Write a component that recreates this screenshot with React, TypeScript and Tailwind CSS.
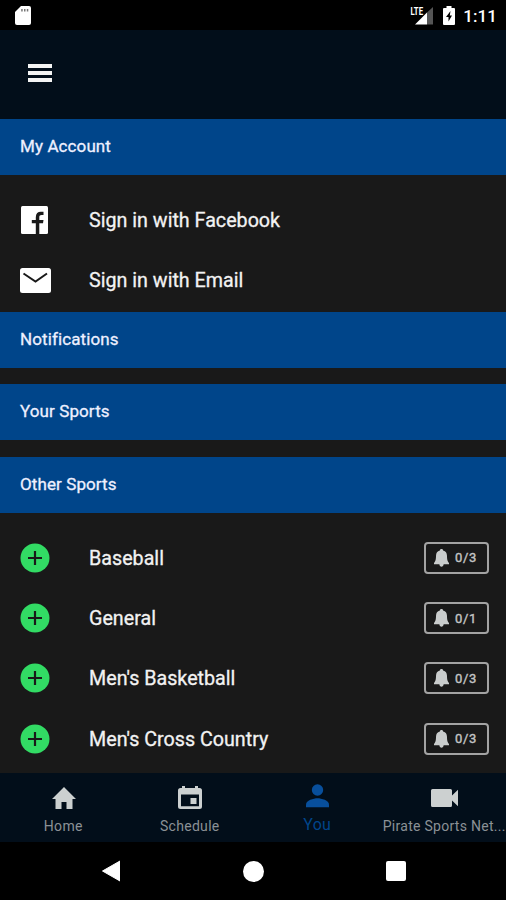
import React from "react";

const sports = [
  { name: "Baseball", count: "0/3" },
  { name: "General", count: "0/1" },
  { name: "Men's Basketball", count: "0/3" },
  { name: "Men's Cross Country", count: "0/3" },
];

function StatusBar() {
  return (
    <div className="flex h-[30px] items-start bg-black pl-[15px] pr-[9px] text-white">
      <svg className="mt-[6px]" width="16" height="19" viewBox="0 0 16 19">
        <path
          d="M6 0h8a2 2 0 0 1 2 2v15a2 2 0 0 1-2 2H2a2 2 0 0 1-2-2V6z"
          fill="#fff"
        />
        <path d="M6.2 3h1.500v2.500H6.200zM9 3h1.500v2.500H9zM11.800 3h1.500v2.500h-1.500z" fill="#777" />
      </svg>

      <div className="ml-auto flex items-start">
        <svg className="mt-[6px]" width="24" height="19" viewBox="0 0 24 19">
          <path d="M17 6.500 23 1v17.500h-6z" fill="#555" />
          <path d="M17 6.500v12H5z" fill="#fff" />
          <text
            x="0.5"
            y="8.5"
            fill="#fff"
            stroke="#000"
            strokeWidth="1.2"
            paintOrder="stroke"
            fontSize="11"
            fontWeight="700"
            textLength="12.5"
            lengthAdjust="spacingAndGlyphs"
          >
            LTE
          </text>
        </svg>
        <svg className="ml-[9px] mt-[6px]" width="12" height="19" viewBox="0 0 12 19">
          <path
            d="M3.500 0h5v2H11a1 1 0 0 1 1 1v15a1 1 0 0 1-1 1H1a1 1 0 0 1-1-1V3a1 1 0 0 1 1-1h2.500z"
            fill="#fff"
          />
          <path d="M7.500 5 3 11h2.500v4.500L9 9.500H6.800z" fill="#000" />
        </svg>
        <span className="ml-[8px] mt-[3px] text-[17px] font-medium leading-[26px] tracking-[0.1px]">
          1:11
        </span>
      </div>
    </div>
  );
}

function SectionTitle({ children }: { children: React.ReactNode }) {
  return (
    <h2 className="flex h-14 items-center bg-[#00458a] pl-5 text-[17px] font-normal tracking-[0.1px] text-[#eef0ff] [-webkit-text-stroke:0.3px_#eef0ff]">
      {children}
    </h2>
  );
}

function Row({
  icon,
  label,
  children,
}: {
  icon: React.ReactNode;
  label: string;
  children?: React.ReactNode;
}) {
  return (
    <div className="flex h-[60.2px] items-center pl-5 pr-[17px]">
      <div className="flex w-[69px]">{icon}</div>
      <span className="pt-[2px] text-[19.7px] leading-7 text-[#f2f2f2] [-webkit-text-stroke:0.3px_#f2f2f2]">
        {label}
      </span>
      {children}
    </div>
  );
}

function FacebookIcon() {
  return (
    <svg className="ml-px" width="28" height="28" viewBox="0 0 28 28">
      <rect width="27" height="28" rx="1.500" fill="#fff" />
      <path
        d="M14.800 28V17.200H10.800v-3.200h4v-2.800c0-3.600 2-5.400 5-5.400h2.700v3.300h-1.900c-1.700 0-2.300.8-2.300 2.200V14h4.200l-.5 3.200h-3.700V28z"
        fill="#191919"
      />
    </svg>
  );
}

function MailIcon() {
  return (
    <svg width="31" height="25" viewBox="0 0 31 25">
      <rect width="31" height="25" rx="2.500" fill="#fff" />
      <path d="M3.500 5.500 15.500 13.500 27 5.500" fill="none" stroke="#191919" strokeWidth="2" />
    </svg>
  );
}

function AddIcon() {
  return (
    <svg width="30" height="30" viewBox="0 0 30 30">
      <circle cx="15" cy="15" r="14.500" fill="#32db64" />
      <path d="M15 8v14M8 15h14" stroke="#191919" strokeWidth="2.200" />
    </svg>
  );
}

function AlertCount({ count }: { count: string }) {
  return (
    <div className="ml-auto flex h-8 w-[65px] items-center rounded-[4px] border-2 border-[#a3a3a3] pl-[8px] text-[13px] tracking-[0.7px] text-[#c4c4c4] [-webkit-text-stroke:0.4px_#c4c4c4]">
      <svg className="mr-[6px]" width="15" height="18" viewBox="0 0 14 18" preserveAspectRatio="none">
        <path
          d="M7 0C6 0 5.500.6 5.500 1.500 3 2.200 2 4 1.900 6.500 1.800 10.500 1.600 12 0 14v1.200h14V14c-1.600-2-1.800-3.500-1.900-7.500C12 4 11 2.200 8.500 1.500 8.500.6 8 0 7 0zM5 15.200c.1 1.600.9 2.500 2 2.500s1.900-.9 2-2.500z"
          fill="#c9cccc"
        />
      </svg>
      {count}
    </div>
  );
}

function TabBar() {
  return (
    <nav className="grid h-[69px] grid-cols-4 bg-[#020e1a] text-[14px] text-[#8b9196]">
      <div className="flex flex-col items-center">
        <svg className="ml-px mt-[14px]" width="24" height="22" viewBox="0 0 24 22">
          <path d="M9.500 22v-7h5v7h6V12H24L12 0 0 12h3.500v10z" fill="#ccd0d0" />
        </svg>
        <span className="mt-[7px] leading-5 tracking-[0.3px]">Home</span>
      </div>
      <div className="flex flex-col items-center">
        <svg className="ml-px mt-[13px]" width="24" height="23" viewBox="0 0 24 23">
          <path
            fillRule="evenodd"
            d="M4 0h3v2h10V0h3v2h1.500A2.500 2.500 0 0 1 24 4.500v16a2.500 2.500 0 0 1-2.500 2.500h-19A2.500 2.500 0 0 1 0 20.500v-16A2.500 2.500 0 0 1 2.500 2H4zM3 8.500v11.800h18V8.500z"
            fill="#ccd0d0"
          />
          <path d="M12.500 12H18.500V18H12.500z" fill="#ccd0d0" />
        </svg>
        <span className="mt-[7px] leading-5 tracking-[0.3px]">Schedule</span>
      </div>
      <div className="flex flex-col items-center text-[#00458a]">
        <svg className="ml-[2px] mt-[11px]" width="23" height="24" viewBox="0 0 23 24">
          <circle cx="11.500" cy="6" r="5.700" fill="#084f9c" />
          <path d="M11.500 14.200C7.500 14.200 0 16.400 0 20.400V23.300h23v-2.900c0-4-7.500-6.200-11.500-6.200z" fill="#084f9c" />
        </svg>
        <span className="ml-[2px] mt-[7px] text-[16px] leading-5 tracking-[0.3px]">You</span>
      </div>
      <div className="flex min-w-0 flex-col items-center">
        <svg className="ml-[3px] mt-[16px]" width="27" height="18" viewBox="0 0 27 18">
          <path
            d="M1.500 0h18A1.500 1.500 0 0 1 21 1.500v5L27 .8v16.400l-6-5.700v5a1.500 1.500 0 0 1-1.500 1.500h-18A1.500 1.500 0 0 1 0 16.500v-15A1.500 1.500 0 0 1 1.500 0z"
            fill="#ccd0d0"
          />
        </svg>
        <span className="ml-[3px] mt-[9px] whitespace-nowrap leading-5 tracking-[0.28px]">
          Pirate Sports Net...
        </span>
      </div>
    </nav>
  );
}

function SystemNav() {
  return (
    <div className="flex h-[58px] items-center bg-black pl-[102px]">
      <svg width="18" height="22" viewBox="0 0 18 22">
        <path d="M18 1v20L.5 11z" fill="#fff" stroke="#fff" strokeLinejoin="round" />
      </svg>
      <div className="ml-[123px] size-[21px] rounded-full bg-white" />
      <div className="ml-[122px] size-5 rounded-[2px] bg-white" />
    </div>
  );
}

export default function App() {
  return (
    <div className="flex h-[900px] w-[506px] flex-col overflow-hidden bg-[#191919] font-[Roboto,sans-serif]">
      <StatusBar />
      <header className="flex h-[89px] items-center bg-[#020e1a] pl-7">
        <div className="mt-[-3px] flex flex-col gap-[3px]">
          <div className="h-1 w-6 bg-[#f4f4f4]" />
          <div className="h-1 w-6 bg-[#f4f4f4]" />
          <div className="h-1 w-6 bg-[#f4f4f4]" />
        </div>
      </header>

      <main className="h-[654px] overflow-hidden">
        <SectionTitle>My Account</SectionTitle>
        <div className="h-[136.5px] pt-[15px]">
          <Row icon={<FacebookIcon />} label="Sign in with Facebook" />
          <Row icon={<MailIcon />} label="Sign in with Email" />
        </div>
        <div className="flex flex-col gap-[16.5px]">
          <SectionTitle>Notifications</SectionTitle>
          <SectionTitle>Your Sports</SectionTitle>
          <SectionTitle>Other Sports</SectionTitle>
        </div>
        <div className="pt-[15.5px]">
          {sports.map((sport) => (
            <Row key={sport.name} icon={<AddIcon />} label={sport.name}>
              <AlertCount count={sport.count} />
            </Row>
          ))}
        </div>
      </main>

      <TabBar />
      <SystemNav />
    </div>
  );
}
